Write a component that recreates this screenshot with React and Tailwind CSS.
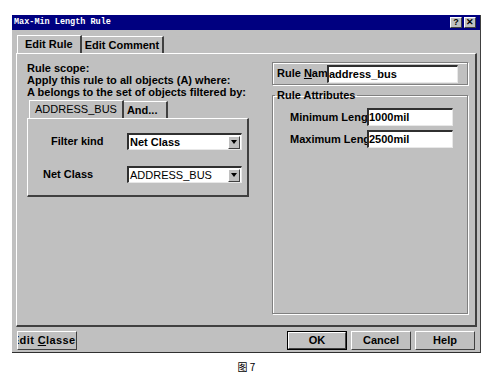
const raised = "border border-t-white border-l-white border-r-[#404040] border-b-[#404040] bg-[#c0c0c0]";
const sunken = "border-t-2 border-l-2 border-b border-r border-t-[#303030] border-l-[#303030] border-b-[#e8e8e8] border-r-[#e8e8e8] bg-white";
const etched = "border border-[#808080] shadow-[inset_1px_1px_0_white,1px_1px_0_white]";

function TitleButton({ children }) {
  return (
    <div className={`w-[12px] h-[11px] flex items-center justify-center text-[9px] font-bold leading-none text-black ${raised}`}>
      {children}
    </div>
  );
}

function Select({ value, bold }) {
  return (
    <div className={`w-[115px] h-[17px] flex items-center ${sunken}`}>
      <span className={`flex-1 pl-[1px] text-[11px] leading-none ${bold ? "font-bold" : "font-normal"}`}>{value}</span>
      <div className={`w-[12px] h-[13px] mr-[1px] flex items-center justify-center ${raised}`}>
        <svg width="6" height="4" viewBox="0 0 6 4"><path d="M0 0h6L3 4z" fill="#000" /></svg>
      </div>
    </div>
  );
}

function Field({ label, labelW, value, inputW }) {
  return (
    <div className="flex items-center">
      <div className="overflow-hidden whitespace-nowrap text-[11px] font-bold" style={{ width: labelW }}>{label}</div>
      <div className={`h-[18px] flex items-center text-[11px] font-bold ${sunken}`} style={{ width: inputW }}>{value}</div>
    </div>
  );
}

function Button({ children, primary }) {
  return (
    <div className={`w-[60px] h-[19px] ${primary ? "border border-black" : ""}`}>
      <div className={`w-full h-full overflow-hidden flex items-center justify-center whitespace-nowrap text-[11px] font-bold ${raised}`}>
        {children}
      </div>
    </div>
  );
}

export default function App() {
  return (
    <div className="w-[497px] h-[389px] bg-white pt-[15px] pl-[12px] text-black" style={{ fontFamily: '"Liberation Sans", Arial, sans-serif' }}>
      <div className="w-[469px] h-[338px] bg-[#c0c0c0] flex flex-col border-r border-b border-r-[#404040] border-b-[#303030]">
        {/* title bar */}
        <div className="h-[15px] bg-[#000080] flex items-center justify-between pl-[2px] pr-[4px]">
          <span className="text-white text-[8.5px] font-bold leading-none" style={{ fontFamily: '"Liberation Mono", monospace' }}>Max-Min Length Rule</span>
          <div className="flex gap-[2px]">
            <TitleButton>?</TitleButton>
            <TitleButton>✕</TitleButton>
          </div>
        </div>

        {/* tabs */}
        <div className="mt-[5px] pl-[5px] flex items-end h-[18px]">
          <div className="h-[18px] px-[7px] flex items-center text-[11px] font-bold border-t border-l border-t-white border-l-white border-r-2 border-r-[#404040]">Edit Rule</div>
          <div className="h-[17px] px-[3px] flex items-center text-[11px] font-bold border-t border-t-white border-r-2 border-r-[#404040]">Edit Comment</div>
        </div>

        {/* tab panel */}
        <div className="ml-[4px] w-[461px] h-[274px] flex border-t border-l border-t-white border-l-white border-r-2 border-b-2 border-r-[#404040] border-b-[#404040]">
          {/* left column */}
          <div className="w-[234px] pl-[10px] pt-[8px] flex flex-col">
            <div className="text-[11px] font-bold leading-[12px]">
              <div>Rule scope:</div>
              <div>Apply this rule to all objects (A) where:</div>
              <div>A belongs to the set of objects filtered by:</div>
            </div>
            <div className="mt-[2px] ml-[2px] flex items-end h-[18px]">
              <div className="h-[18px] px-[5px] flex items-center text-[11px] border-t border-l border-t-white border-l-white border-r-2 border-r-[#404040]">ADDRESS_BUS</div>
              <div className="h-[17px] pl-[3px] pr-[9px] flex items-center text-[11px] font-bold border-t border-t-white border-r-2 border-r-[#404040]">And...</div>
            </div>
            <div className="w-[222px] h-[79px] flex flex-col pt-[14px] gap-[16px] border-t border-l border-t-white border-l-white border-r-2 border-b-2 border-r-[#404040] border-b-[#404040]">
              <div className="flex items-center">
                <div className="w-[99px] pl-[23px] text-[11px] font-bold">Filter kind</div>
                <Select value="Net Class" bold />
              </div>
              <div className="flex items-center">
                <div className="w-[99px] pl-[15px] text-[11px] font-bold">Net Class</div>
                <Select value="ADDRESS_BUS" />
              </div>
            </div>
          </div>

          {/* right column */}
          <div className="ml-[21px] w-[196px] pt-[8px] flex flex-col">
            <div className={`h-[23px] flex items-center pl-[4px] ${etched}`}>
              <Field label={<span>Rule <u>N</u>ame</span>} labelW={50} value="address_bus" inputW={131} />
            </div>
            <fieldset className={`mt-[4px] h-[225px] ${etched}`}>
              <legend className="ml-[2px] px-[2px] text-[11px] font-bold leading-[12px]">Rule Attributes</legend>
              <div className="mt-[7px] pl-[17px] flex flex-col gap-[4px]">
                <Field label="Minimum Length" labelW={77} value="1000mil" inputW={86} />
                <Field label="Maximum Length" labelW={77} value="2500mil" inputW={86} />
              </div>
            </fieldset>
          </div>
        </div>

        {/* bottom buttons */}
        <div className="mt-[4px] px-[5px] flex gap-[4px]">
          <Button><span className="shrink-0 tracking-[0.4px]">Edit <u>C</u>lasses</span></Button>
          <div className="flex-1" />
          <Button primary>OK</Button>
          <Button>Cancel</Button>
          <Button>Help</Button>
        </div>
      </div>
      <div className="w-[469px] mt-[9px] text-center text-[10px] leading-none" style={{ fontFamily: '"Noto Sans CJK SC", sans-serif' }}>图 7</div>
    </div>
  );
}
